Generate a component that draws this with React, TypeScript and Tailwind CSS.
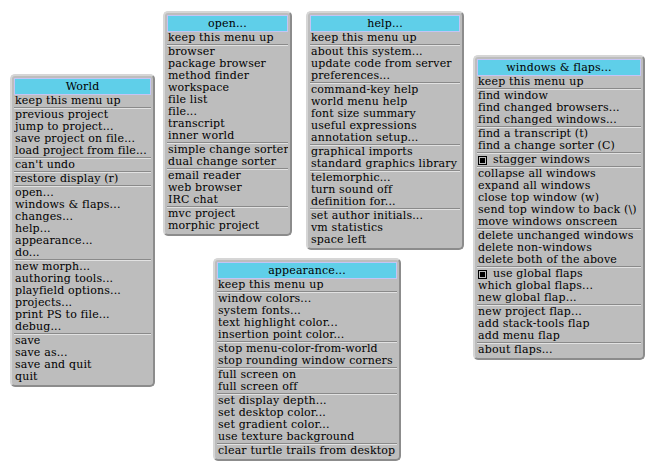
import React from "react";

type Item = string | null; // null = separator

const world: Item[] = [
  "keep this menu up", null,
  "previous project", "jump to project...", "save project on file...", "load project from file...", null,
  "can't undo", null,
  "restore display (r)", null,
  "open...", "windows & flaps...", "changes...", "help...", "appearance...", "do...", null,
  "new morph...", "authoring tools...", "playfield options...", "projects...", "print PS to file...", "debug...", null,
  "save", "save as...", "save and quit", "quit",
];

const open: Item[] = [
  "keep this menu up", null,
  "browser", "package browser", "method finder", "workspace", "file list", "file...", "transcript", "inner world", null,
  "simple change sorter", "dual change sorter", null,
  "email reader", "web browser", "IRC chat", null,
  "mvc project", "morphic project",
];

const help: Item[] = [
  "keep this menu up", null,
  "about this system...", "update code from server", "preferences...", null,
  "command-key help", "world menu help", "font size summary", "useful expressions", "annotation setup...", null,
  "graphical imports", "standard graphics library", null,
  "telemorphic...", "turn sound off", "definition for...", null,
  "set author initials...", "vm statistics", "space left",
];

const windows: Item[] = [
  "keep this menu up", null,
  "find window", "find changed browsers...", "find changed windows...", null,
  "find a transcript (t)", "find a change sorter (C)", null,
  "[x]stagger windows", null,
  "collapse all windows", "expand all windows", "close top window (w)", "send top window to back (\\)", "move windows onscreen", null,
  "delete unchanged windows", "delete non-windows", "delete both of the above", null,
  "[x]use global flaps", "which global flaps...", "new global flap...", null,
  "new project flap...", "add stack-tools flap", "add menu flap", null,
  "about flaps...",
];

const appearance: Item[] = [
  "keep this menu up", null,
  "window colors...", "system fonts...", "text highlight color...", "insertion point color...", null,
  "stop menu-color-from-world", "stop rounding window corners", null,
  "full screen on", "full screen off", null,
  "set display depth...", "set desktop color...", "set gradient color...", "use texture background", null,
  "clear turtle trails from desktop",
];

function Check() {
  return (
    <span className="inline-flex items-center justify-center w-[9px] h-[9px] border border-black mr-[6px]">
      <span className="block w-[5px] h-[5px] bg-black" />
    </span>
  );
}

function Menu({ title, items, className }: { title: string; items: Item[]; className: string }) {
  return (
    <div
      className={
        "absolute bg-[#bdbdbd] rounded-[5px] border-2 border-t-[#d6d6d6] border-l-[#d6d6d6] border-r-[#8c8c8c] border-b-[#8c8c8c] pt-[2px] px-[2px] pb-[2px] " +
        className
      }
    >
      <div className="h-[17px] bg-[#5fcfe9] border border-[#c4c4f4] flex items-center justify-center text-black leading-[15px]">
        {title}
      </div>
      {items.map((it, i) =>
        it === null ? (
          <div key={i} className="h-[2px] border-t border-t-[#8a8a8a] border-b border-b-[#e2e2e2]" />
        ) : (
          <div key={i} className="h-[12px] leading-[12px] whitespace-nowrap overflow-hidden text-black pl-[1px] flex items-center">
            {it.startsWith("[x]") ? (
              <>
                <Check />
                {it.slice(3)}
              </>
            ) : (
              it
            )}
          </div>
        )
      )}
    </div>
  );
}

export default function App() {
  return (
    <div
      className="relative w-[659px] h-[472px] bg-white overflow-hidden text-[11px] tracking-[0.15px]"
      style={{ fontFamily: '"DejaVu Serif", "Liberation Serif", serif' }}
    >
      <Menu title="World" items={world} className="left-[10px] top-[74px] w-[145px]" />
      <Menu title="open..." items={open} className="left-[163px] top-[11px] w-[129px]" />
      <Menu title="help..." items={help} className="left-[306px] top-[11px] w-[158px]" />
      <Menu title="windows & flaps..." items={windows} className="left-[473px] top-[55px] w-[172px]" />
      <Menu title="appearance..." items={appearance} className="left-[213px] top-[258px] w-[188px]" />
    </div>
  );
}
